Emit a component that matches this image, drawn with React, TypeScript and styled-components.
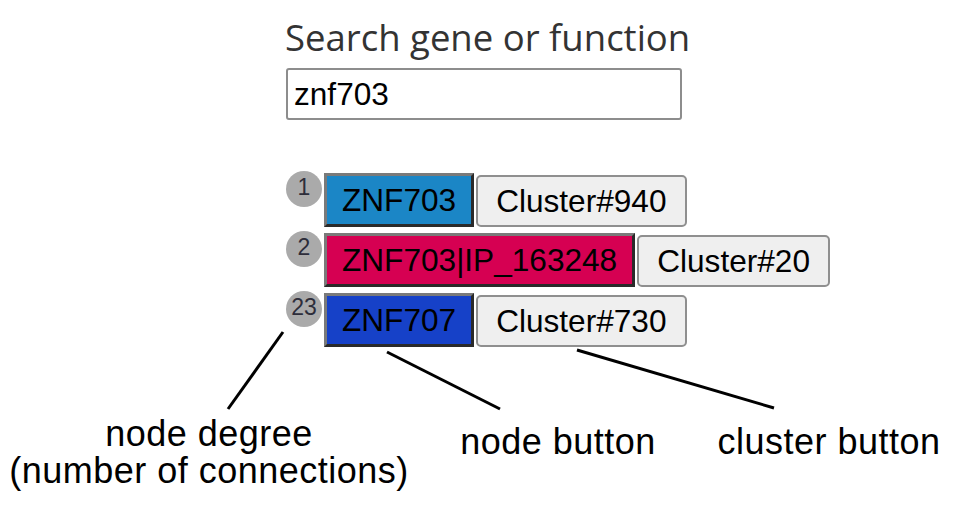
import styled, { createGlobalStyle } from 'styled-components'

const GlobalStyle = createGlobalStyle`
  html, body {
    margin: 0;
    padding: 0;
    background: #ffffff;
  }
  body {
    width: 968px;
    height: 523px;
    overflow: hidden;
    font-family: "Liberation Sans", Arial, sans-serif;
  }
`

const Page = styled.div`
  position: relative;
  width: 968px;
  height: 523px;
`

const Panel = styled.div`
  display: flex;
  flex-direction: column;
  padding: 13px 0 0 285px;
`

const Title = styled.label`
  font-family: "Open Sans", "Noto Sans", sans-serif;
  font-size: 36.5px;
  line-height: 49px;
  color: #333333;
`

const SearchInput = styled.input`
  box-sizing: border-box;
  width: 396px;
  height: 52px;
  margin: 6px 0 0 1px;
  padding: 0 6px;
  border: 2px solid #8d8d8d;
  border-radius: 3px;
  font-family: "Liberation Sans", Arial, sans-serif;
  font-size: 31.6px;
  color: #000000;
  outline: none;
`

const Results = styled.div`
  display: flex;
  flex-direction: column;
  gap: 6px;
  margin-top: 53px;
`

const Row = styled.div`
  display: flex;
  align-items: flex-start;
`

const Degree = styled.span`
  display: flex;
  align-items: center;
  justify-content: center;
  width: 36px;
  height: 36px;
  margin: -2px 2px 0 1px;
  border-radius: 50%;
  background: #aaaaaa;
  color: #2d2d3a;
  font-size: 23px;
  line-height: 1;
  padding-bottom: 4px;
  box-sizing: border-box;
`

const NodeButton = styled.button<{ $color: string }>`
  box-sizing: border-box;
  height: 54px;
  padding: 0 15px;
  border-style: solid;
  border-width: 3px;
  border-color: #7a7a7a #2a2a2a #2a2a2a #7a7a7a;
  background: ${(p) => p.$color};
  color: #000000;
  font-family: "Liberation Sans", Arial, sans-serif;
  font-size: 31.6px;
  cursor: pointer;
`

const ClusterButton = styled.button`
  box-sizing: border-box;
  height: 52px;
  margin: 2px 0 0 2px;
  padding: 0 18px;
  border: 2px solid #8f8f8f;
  border-radius: 5px;
  background: #efefef;
  color: #000000;
  font-family: "Liberation Sans", Arial, sans-serif;
  font-size: 31.6px;
  cursor: pointer;
`

const Callouts = styled.svg`
  position: absolute;
  left: 0;
  top: 0;
  pointer-events: none;
`

const Labels = styled.div`
  display: flex;
  align-items: flex-start;
  margin-top: 68px;
`

const Label = styled.div<{ $width: number; $offset?: number }>`
  width: ${(p) => p.$width}px;
  padding-top: ${(p) => p.$offset ?? 0}px;
  text-align: center;
  font-family: "Liberation Sans", Arial, sans-serif;
  font-size: 36px;
  line-height: 37px;
  letter-spacing: 0.5px;
  color: #000000;
`

type Hit = {
  degree: number
  gene: string
  color: string
  cluster: number
}

const hits: Hit[] = [
  { degree: 1, gene: 'ZNF703', color: '#1b86c6', cluster: 940 },
  { degree: 2, gene: 'ZNF703|IP_163248', color: '#d60052', cluster: 20 },
  { degree: 23, gene: 'ZNF707', color: '#1641c8', cluster: 730 },
]

export default function App() {
  return (
    <Page>
      <GlobalStyle />
      <Panel>
        <Title htmlFor="search">Search gene or function</Title>
        <SearchInput id="search" defaultValue="znf703" />
        <Results>
          {hits.map((hit) => (
            <Row key={hit.gene}>
              <Degree>{hit.degree}</Degree>
              <NodeButton $color={hit.color}>{hit.gene}</NodeButton>
              <ClusterButton>Cluster#{hit.cluster}</ClusterButton>
            </Row>
          ))}
        </Results>
      </Panel>
      <Labels>
        <Label $width={418}>
          node degree
          <br />
          (number of connections)
        </Label>
        <Label $width={280} $offset={8}>node button</Label>
        <Label $width={262} $offset={8}>cluster button</Label>
      </Labels>
      <Callouts width="968" height="523" viewBox="0 0 968 523">
        <g stroke="#000" strokeWidth="3" strokeLinecap="butt">
          <line x1="283" y1="332" x2="228" y2="409" />
          <line x1="387" y1="352" x2="500" y2="409" />
          <line x1="577" y1="350" x2="774" y2="408" />
        </g>
      </Callouts>
    </Page>
  )
}
